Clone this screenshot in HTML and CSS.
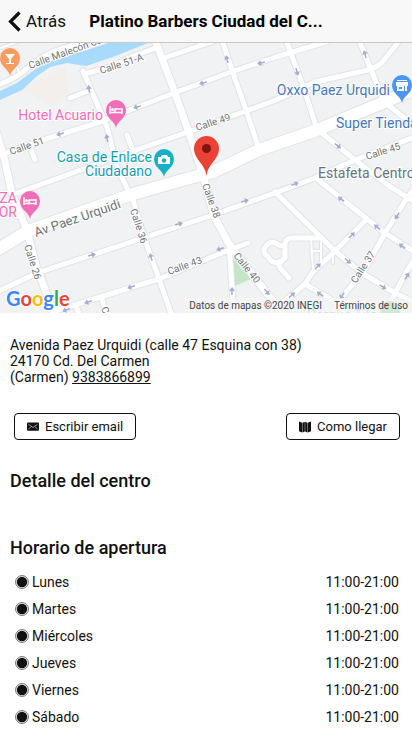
FILE: index.html
```
<!DOCTYPE html>
<html lang="es">
<head>
    <meta charset="UTF-8">
    <meta name="viewport" content="width=device-width, initial-scale=1.0">
    <title>Platino Barbers Ciudad del Carmen</title>
    <link rel="stylesheet" href="styles.css">
</head>
<body>

    <!-- Top bar -->
    <header class="toolbar">
        <a class="back" href="#">
            <svg width="13" height="21" viewBox="0 0 13 21" aria-hidden="true"><path d="M11.5 1.5 2.500 10.500l9 9" fill="none" stroke="#111" stroke-width="3.200"/></svg>
            <span>Atrás</span>
        </a>
        <h1>Platino Barbers Ciudad del C...</h1>
    </header>

    <!-- Map -->
    <section class="map" aria-label="Mapa">
        <svg class="map-canvas" viewBox="0 43 412 270" preserveAspectRatio="xMidYMid slice">
            <defs>
                <g id="roads">
                    <path d="M-3 134 4 157 12 194 27 230 36 266 55 315" class="mid"/>
                    <path d="M-5 86C18 78 22 72 37 61S62 49 90 40"/>
                    <path d="M-5 50 20 41M13 58 19 72" class="thin"/>
                    <path d="M0 155 43 140 100 122 140 106 174 93 231 72 276 57 329 41"/>
                    <path d="M17 193 67 175 136 150 188 132 246 111 276 100 315 82 368 70Q380 66 384 60L400 40"/>
                    <path d="M-5 251 28 231 133 194 186 179 213 172 259 150 317 130 382 103 417 88" class="wide"/>
                    <path d="M155 40 174 90 188 130 203 175 214 216 229 244 246 266 269 296 284 316" class="mid"/>
                    <path d="M229 244 234 316"/>
                    <path d="M84 74 110 67 136 55 156 48M164 58 214 41"/>
                    <path d="M83 71 107 127 118 170 133 200 143 234 159 279 172 316"/>
                    <path d="M70 98 91 90M30 147 35 160M127 135 132 148"/>
                    <path d="M222 40 233 73 246 110 259 149M286 40 302 83 317 129 355 160 389 186 415 202"/>
                    <path d="M359 40 384 102 415 126"/>
                    <path d="M-5 293 37 273 140 239 216 214 272 194 315 178 355 160 417 136"/>
                    <path d="M248 243 219 254 159 279 136 286 52 312M102 299 107 316M76 306 80 316"/>
                    <path d="M275 192 335 251 362 273 395 293 416 303M316 178 367 219 385 233 416 253"/>
                    <path d="M416 186 405 201 385 233 365 269 339 301 331 316M367 219 335 251 312 273 305 284 285 301 268 316"/>
                    <path d="M305 284 332 300 350 316M416 255 395 293 386 316"/>
                    <path d="M320 238H291Q285 239 285 245V258L279 263 280 268 289 278M285 246Q279 246 275 243T266 246 268 257Q272 264 279 262"/>
                    <path d="M311 239 313 270M321 240 321 262M311 251H321M333 255V263" class="thin"/>
                </g>
                <path id="arrow" d="M-4-.8H0V-3L4 0 0 3V.8H-4Z"/>
                <path id="pin" d="M0 17C-1 10-10 8-10-1A10 10 0 0 1 10-1C10 8 1 10 0 17Z"/>
            </defs>

            <rect x="0" y="43" width="412" height="270" fill="#f0f2f4"/>
            <path d="M42 78 66 67 68 96 50 106 30 92 20 92Z" fill="#f2efec"/>
            <path d="M0 91 17 83 37 68 50 61 87 50 108 43H148L113 57 86 66 67 63 50 67 37 76 22 90 0 100Z" fill="#a8dafb"/>
            <path d="M233 256 251 279 235 286Z" fill="#c5e6c6"/>
            <use href="#roads" class="road-edge"/>
            <use href="#roads" class="road"/>

            <!-- One way arrows -->
            <g fill="#a7abcf">
                <use href="#arrow" transform="translate(89 89) rotate(-100)"/>
                <use href="#arrow" transform="translate(60 134) rotate(164)"/>
                <use href="#arrow" transform="translate(137 107) rotate(164)"/>
                <use href="#arrow" transform="translate(107 138) rotate(-100)"/>
                <use href="#arrow" transform="translate(203 83) rotate(164)"/>
                <use href="#arrow" transform="translate(261 63) rotate(164)"/>
                <use href="#arrow" transform="translate(227 59) rotate(-105)"/>
                <use href="#arrow" transform="translate(297 72) rotate(75)"/>
                <use href="#arrow" transform="translate(365 54) rotate(-105)"/>
                <use href="#arrow" transform="translate(338 146) rotate(38)"/>
                <use href="#arrow" transform="translate(92 255) rotate(-15)"/>
                <use href="#arrow" transform="translate(66 310) rotate(160)"/>
                <use href="#arrow" transform="translate(88 302) rotate(160)"/>
                <use href="#arrow" transform="translate(131 287) rotate(160)"/>
                <use href="#arrow" transform="translate(179 224) rotate(-15)"/>
                <use href="#arrow" transform="translate(245 201) rotate(-15)"/>
                <use href="#arrow" transform="translate(151 257) rotate(-105)"/>
                <use href="#arrow" transform="translate(220 249) rotate(160)"/>
                <use href="#arrow" transform="translate(232 291) rotate(-88)"/>
                <use href="#arrow" transform="translate(267 292) rotate(50)"/>
                <use href="#arrow" transform="translate(295 184) rotate(-18)"/>
                <use href="#arrow" transform="translate(341 199) rotate(-142)"/>
                <use href="#arrow" transform="translate(377 227) rotate(-142)"/>
                <use href="#arrow" transform="translate(402 246) rotate(-142)"/>
                <use href="#arrow" transform="translate(397 216) rotate(122)"/>
                <use href="#arrow" transform="translate(352 235) rotate(-45)"/>
                <use href="#arrow" transform="translate(318 266) rotate(-45)"/>
                <use href="#arrow" transform="translate(292 295) rotate(-42)"/>
                <use href="#arrow" transform="translate(348 261) rotate(42)"/>
                <use href="#arrow" transform="translate(383 287) rotate(32)"/>
                <use href="#arrow" transform="translate(320 294) rotate(-146)"/>
                <use href="#arrow" transform="translate(342 296) rotate(122)"/>
                <use href="#arrow" transform="translate(407 276) rotate(-60)"/>
            </g>

            <!-- Street names -->
            <g class="street">
                <text transform="translate(30 69) rotate(-20)">Calle Malecón Ca</text>
                <text transform="translate(101 74) rotate(-18)">Calle 51-A</text>
                <text transform="translate(11 155) rotate(-19)">Calle 51</text>
                <text transform="translate(197 131) rotate(-18)">Calle 49</text>
                <text transform="translate(367 160) rotate(-18)">Calle 45</text>
                <text transform="translate(169 275) rotate(-20)">Calle 43</text>
                <text transform="translate(24 246) rotate(72)">Calle 26</text>
                <text transform="translate(130 210) rotate(72)">Calle 36</text>
                <text transform="translate(202 185) rotate(70)">Calle 38</text>
                <text transform="translate(233 256) rotate(51)">Calle 40</text>
                <text transform="translate(356 284) rotate(-57)">Calle 37</text>
                <text transform="translate(101 308) rotate(72)">Calle 34</text>
                <text class="avenue" transform="translate(36 237) rotate(-19)">Av Paez Urquidi</text>
            </g>

            <!-- Places -->
            <g class="place">
                <text x="103" y="120" fill="#f06eb7" text-anchor="end">Hotel Acuario</text>
                <text x="152" y="162" fill="#129eaf" text-anchor="end">Casa de Enlace</text>
                <text x="152" y="176" fill="#129eaf" text-anchor="end">Ciudadano</text>
                <text x="390" y="95" fill="#4677b9" text-anchor="end">Oxxo Paez Urquidi</text>
                <text x="336" y="128" fill="#4677b9">Super Tienda</text>
                <text x="318" y="178" fill="#67747c">Estafeta Centro</text>
                <text x="17" y="203" fill="#f06eb7" text-anchor="end">PLAZA</text>
                <text x="17" y="217" fill="#f06eb7" text-anchor="end">MAYOR</text>
                <text x="307" y="320" fill="#7fc18b">Parque Tila</text>
            </g>

            <use href="#pin" x="10" y="59" fill="#fb9a61"/>
            <path d="M5 54H15L11 59V63H14V64H6V63H9V59Z" fill="#fff"/>
            <use href="#pin" x="116" y="111" fill="#f06eb7"/>
            <path d="M110 106V114M110 112.500H122M122 114V109H115V112" fill="none" stroke="#fff" stroke-width="1.500"/>
            <circle cx="112.500" cy="109.500" r="1.500" fill="#fff"/>
            <use href="#pin" x="30" y="202" fill="#f06eb7"/>
            <path d="M24 197V205M24 203.500H36M36 205V200H29V203" fill="none" stroke="#fff" stroke-width="1.500"/>
            <circle cx="26.500" cy="200.500" r="1.500" fill="#fff"/>
            <use href="#pin" x="164" y="160" fill="#18b0c5"/>
            <path d="M159 157H161L162 155H167L168 157H170V164H158V157Z" fill="#fff"/>
            <circle cx="164" cy="160.500" r="2.200" fill="#18b0c5"/>
            <use href="#pin" x="402" y="86" fill="#4b96f3"/>
            <path d="M397 80H407V81H397ZM396 82H408V86H396ZM397 86H407V91H397Z" fill="#fff"/>
            <path d="M399 87H402V89H399ZM404 86H405V91H404Z" fill="#4b96f3"/>
            <circle cx="390" cy="311" r="10" fill="#87ca91"/>

            <!-- Salon marker -->
            <path d="M206.500 177C206 164 194 160 194 148.500A12.500 12.500 0 0 1 219 148.500C219 160 207 164 206.500 177Z" fill="#ea4335"/>
            <circle cx="206.500" cy="148.500" r="4.500" fill="#811411"/>
        </svg>
        <a class="google" href="#" aria-label="Google"><span class="g-blue">G</span><span class="g-red">o</span><span class="g-yellow">o</span><span class="g-blue">g</span><span class="g-green">l</span><span class="g-red">e</span></a>
        <div class="map-legal">
            <span>Datos de mapas ©2020 INEGI</span>
            <a href="#">Términos de uso</a>
        </div>
    </section>

    <main class="content">
        <address>
            Avenida Paez Urquidi (calle 47 Esquina con 38)<br>
            24170 Cd. Del Carmen<br>
            (Carmen) <a href="tel:9383866899">9383866899</a>
        </address>

        <div class="actions">
            <button type="button">
                <svg width="12" height="12" viewBox="0 0 13 12" aria-hidden="true"><rect x="0" y="1" width="13" height="9" rx="1" fill="#111"/><path d="M1.500 3 6.500 6.500l5-3.500M1.500 8.500 4.500 5.500M11.500 8.500l-3-3" fill="none" stroke="#fff" stroke-width=".6"/></svg>
                Escribir email
            </button>
            <button type="button">
                <svg width="12" height="12" viewBox="0 0 13 12" aria-hidden="true"><path d="M0 0 3.500 1.500V12L0 10.500ZM3.900 1.500 6.300.300V10.800L3.900 12ZM6.700.300 9.100 1.500V12L6.700 10.800ZM9.500 1.500 13 0V10.500L9.500 12Z" fill="#111"/></svg>
                Como llegar
            </button>
        </div>

        <h2 class="detail-title">Detalle del centro</h2>
        <h2>Horario de apertura</h2>

        <!-- Opening hours -->
        <svg class="hidden" aria-hidden="true"><symbol id="dot" viewBox="0 0 14 14"><circle cx="7" cy="7" r="6.400" fill="none" stroke="#444" stroke-width=".8"/><circle cx="7" cy="7" r="5.200" fill="#111"/></symbol></svg>
        <table class="hours">
            <tr><th scope="row"><svg class="dot"><use href="#dot"/></svg>Lunes</th><td>11:00-21:00</td></tr>
            <tr><th scope="row"><svg class="dot"><use href="#dot"/></svg>Martes</th><td>11:00-21:00</td></tr>
            <tr><th scope="row"><svg class="dot"><use href="#dot"/></svg>Miércoles</th><td>11:00-21:00</td></tr>
            <tr><th scope="row"><svg class="dot"><use href="#dot"/></svg>Jueves</th><td>11:00-21:00</td></tr>
            <tr><th scope="row"><svg class="dot"><use href="#dot"/></svg>Viernes</th><td>11:00-21:00</td></tr>
            <tr><th scope="row"><svg class="dot"><use href="#dot"/></svg>Sábado</th><td>11:00-21:00</td></tr>
        </table>
    </main>

</body>
</html>
```
FILE: styles.css
```
* {
    box-sizing: border-box;
}

body {
    margin: 0;
    background-color: #fff;
    color: #111;
    font-family: Roboto, "Liberation Sans", sans-serif;
    font-size: 14px;
    line-height: 16px;
}

/* Top bar */
.toolbar {
    display: grid;
    grid-template-columns: 1fr auto 1fr;
    align-items: center;
    height: 43px;
    padding: 0 8px;
    background-color: #f8f8f8;
    border-bottom: 1px solid #c8c8c8;
}

.back {
    display: flex;
    align-items: center;
    gap: 5px;
    color: #111;
    font-size: 17px;
    line-height: 20px;
    text-decoration: none;
}

.toolbar h1 {
    margin: 0;
    color: #000;
    font-size: 17px;
    line-height: 20px;
    font-weight: 700;
    white-space: nowrap;
}

/* Map */
.map {
    position: relative;
    height: 270px;
    overflow: hidden;
}

.map-canvas {
    display: block;
    width: 100%;
    height: 100%;
}

/* Each road is drawn twice: first the grey edge, then the white surface */
.road,
.road-edge {
    fill: none;
    stroke-linecap: round;
    stroke-linejoin: round;
    stroke-width: calc(5px + var(--edge));
}

.road {
    --edge: 0px;
    stroke: #fff;
}

.road-edge {
    --edge: 2px;
    stroke: #e1e3e6;
}

.thin {
    stroke-width: calc(2px + var(--edge));
}

.mid {
    stroke-width: calc(7px + var(--edge));
}

.wide {
    stroke-width: calc(12px + var(--edge));
}

.street text {
    font-size: 10px;
    fill: #6f7377;
    stroke: #fff;
    stroke-width: 2px;
    paint-order: stroke;
}

.street .avenue {
    font-size: 13px;
}

.place text {
    font-size: 14px;
    stroke: #fff;
    stroke-width: 2px;
    paint-order: stroke;
}

.google {
    position: absolute;
    left: 6px;
    bottom: 2px;
    font-family: Lato, sans-serif;
    font-size: 20px;
    line-height: 26px;
    font-weight: 700;
    text-decoration: none;
    -webkit-text-stroke: 2px #fff;
    paint-order: stroke;
}

.g-blue {
    color: #4285f4;
}

.g-red {
    color: #ea4335;
}

.g-yellow {
    color: #fbbc04;
}

.g-green {
    color: #34a853;
}

.map-legal {
    position: absolute;
    right: 0;
    bottom: 0;
    display: flex;
    gap: 12px;
    padding: 0 4px;
    background-color: rgba(245, 245, 245, 0.7);
    color: #444;
    font-size: 10px;
    line-height: 15px;
}

.map-legal a {
    color: #444;
    text-decoration: none;
}

/* Centre information */
.content {
    padding: 24px 10px 0;
}

address {
    font-style: normal;
}

address a {
    color: #111;
}

.actions {
    display: flex;
    justify-content: space-between;
    margin: 28px 2px 0 4px;
}

.actions button {
    display: flex;
    align-items: center;
    gap: 6px;
    height: 27px;
    padding: 0 12px;
    border: 1px solid #111;
    border-radius: 4px;
    background-color: #fff;
    color: #111;
    font-family: inherit;
    font-size: 13px;
    cursor: pointer;
}

h2 {
    margin: 0;
    font-size: 18px;
    line-height: 21px;
    font-weight: 500;
}

.detail-title {
    margin: 30px 0 46px;
}

/* Opening hours */
.hours {
    width: 100%;
    margin-top: 10px;
    border-collapse: collapse;
}

.hours th,
.hours td {
    height: 27px;
    padding: 0 3px 0 5px;
    font-weight: 400;
    text-align: left;
}

.hours td {
    text-align: right;
}

.dot {
    width: 14px;
    height: 14px;
    margin-right: 3px;
    vertical-align: -2px;
}

.hidden {
    display: none;
}
```
